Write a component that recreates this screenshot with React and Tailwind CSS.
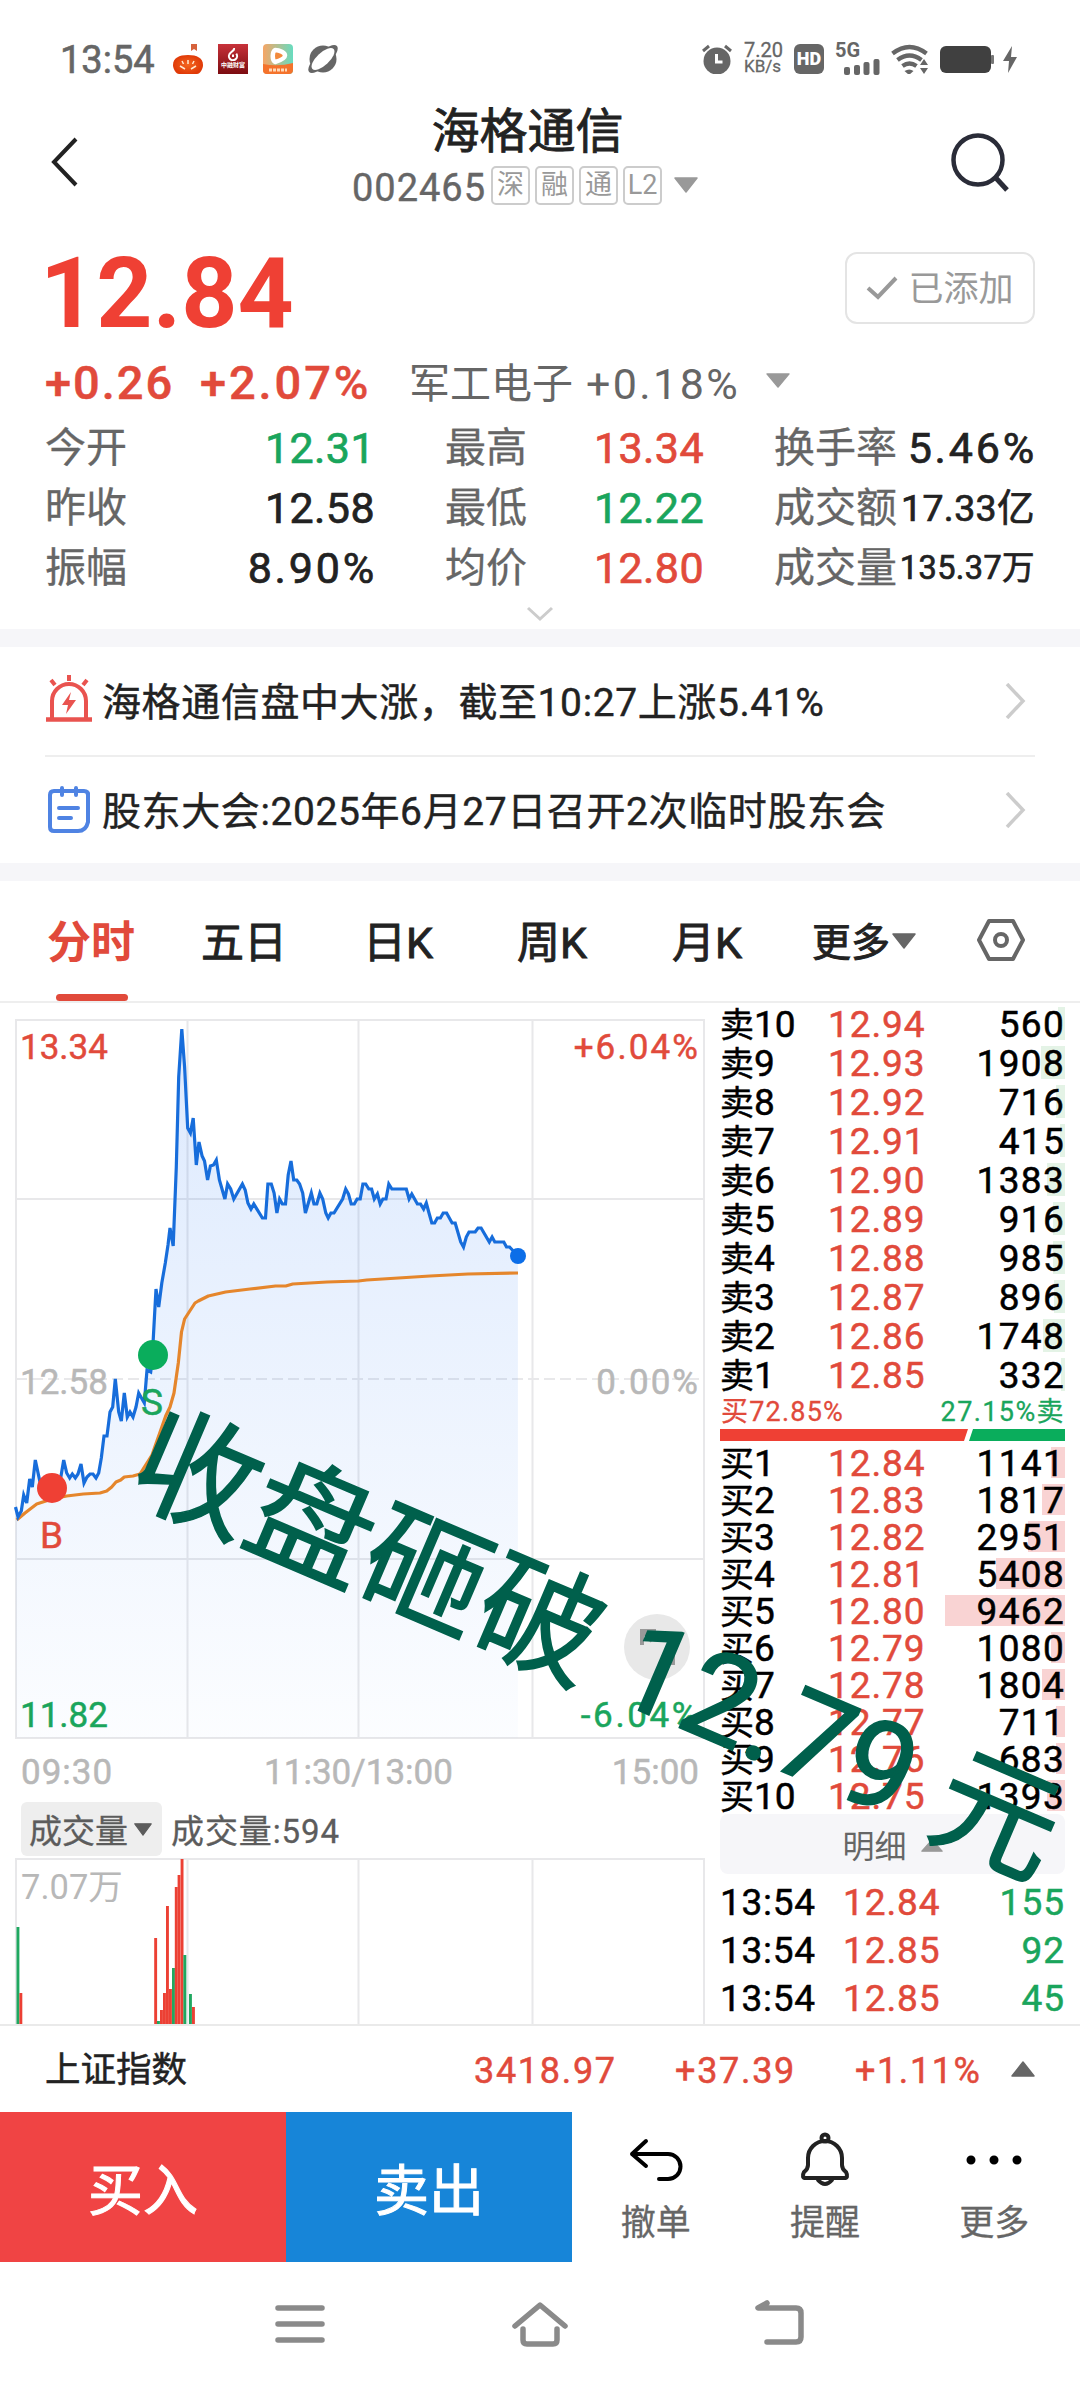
import React from "react";

const sells = [
  [10, "12.94", 560], [9, "12.93", 1908], [8, "12.92", 716], [7, "12.91", 415], [6, "12.90", 1383],
  [5, "12.89", 916], [4, "12.88", 985], [3, "12.87", 896], [2, "12.86", 1748], [1, "12.85", 332],
];
const buys = [
  [1, "12.84", 1141], [2, "12.83", 1817], [3, "12.82", 2951], [4, "12.81", 5408], [5, "12.80", 9462],
  [6, "12.79", 1080], [7, "12.78", 1804], [8, "12.77", 711], [9, "12.76", 683], [10, "12.75", 1393],
];
const trades = [["13:54", "12.84", 155], ["13:54", "12.85", 92], ["13:54", "12.85", 45]];
const maxVolume = 9462;

const priceLine =
  "15.5,1507 18,1517 21.3,1511 23.7,1495 26.7,1503 29.7,1479 32.3,1487 35.3,1460 40,1482 46.7,1490 60,1482 63.7,1460 66.7,1473 69.7,1478 72.3,1474 75.3,1478 78,1474 81,1464 84,1483 87,1477 90,1474 93,1474 96,1478 98.7,1473 101.3,1458 104,1436 107,1436 110,1412 112.7,1407 115.3,1379 118.7,1412 121.3,1421 124.3,1393 127.3,1417 130,1412 133,1417 136,1407 138.7,1393 144.3,1403 147,1370 150.7,1372 153,1355 153.2,1340 156,1289 158.7,1307 161.8,1283 165.3,1263 168,1245 170,1228 173.2,1246 176.3,1167 178.7,1077 181.8,1029 184.6,1067 187.7,1128 190.4,1133 193.2,1118 196.3,1165 199,1142 202.1,1156 204.5,1161 207.6,1180 210.4,1166 213.5,1165 216.3,1160 219.4,1180 224.9,1199 227.6,1184 230.7,1189 233.8,1199 242.4,1184 245.2,1190 247.9,1203 251,1209 253.8,1204 262.4,1218 265.5,1218 267.9,1184 271.3,1184 274.1,1193 276.9,1213 279.6,1199 282.4,1204 285.5,1204 288.2,1175 291,1161 293.7,1180 296.8,1180 299.6,1184 302.7,1193 305.4,1213 311.3,1193 314,1204 316.8,1204 319.9,1193 322.7,1199 325.8,1213 328.2,1218 330.9,1213 334,1213 342.6,1199 345.7,1189 348.5,1194 351.2,1204 354.3,1204 357.1,1199 360.2,1199 362.9,1184 365.7,1184 368.8,1189 371.6,1189 374.3,1199 377.4,1194 380.2,1204 382.9,1199 386,1199 388.8,1184 391.9,1189 406.3,1189 409.1,1199 411.8,1194 417.4,1204 420.5,1204 423.6,1209 426.3,1203 429,1213 431.8,1223 434.6,1223 437.3,1218 440.4,1218 443.2,1213 446.6,1213 452.1,1223 455.2,1223 460.7,1242 463.5,1247 466.3,1237 469,1232 475.2,1232 478,1228 481.1,1228 489.3,1242 492.1,1237 494.8,1242 503.8,1242 506.5,1247 509.6,1247 517.9,1256";
const averageLine =
  "16.7,1520 25,1513 36.7,1504 52,1499 66.7,1496 83.3,1494 100,1493 106.7,1491 111.7,1487 116,1482 120.7,1480 124.3,1477 133,1476 140,1474 152,1455 165.7,1416 170,1407 174,1393 178.3,1363 181.5,1332 184.6,1319 195,1303 198.3,1301 208.3,1296 225.6,1292 250,1289 275.5,1286 285.8,1286 292.7,1284 327,1282 358.5,1281 366.7,1280 430,1276 468,1274 518,1273";
const volumeBars = [
  [16.5, 1927, 0], [19.4, 1993, 1], [154.2, 1938, 1], [157, 2021, 0], [160, 2010, 1], [163, 1993, 1], [166, 1906, 1],
  [169, 1989, 1], [172, 1968, 0], [174.8, 1887, 1], [177.6, 1875, 1], [180.6, 1859, 1], [183.4, 1955, 0],
  [189, 1994, 0], [192, 2007, 1],
];

function Caret({ up = false, className }) {
  return (
    <svg viewBox="0 0 24 16" preserveAspectRatio="none" className={className}>
      <path d={up ? "M1 15 12 1 23 15Z" : "M1 1h22L12 15Z"} fill="currentColor" stroke="currentColor" strokeWidth="1.5" strokeLinejoin="round" />
    </svg>
  );
}

function StatusBar() {
  return (
    <div className="flex h-[78px] items-end pb-1 pl-[60px] text-[#666]">
      <span className="w-[113px] text-[38px] leading-[28px] [-webkit-text-stroke:0.6px_currentColor]">13:54</span>
      <svg viewBox="0 0 30 30" className="h-[30px] w-[30px]">
        <defs>
          <radialGradient id="pumpkin"><stop offset="0" stopColor="#f4671f" /><stop offset="1" stopColor="#e03a08" /></radialGradient>
        </defs>
        <path d="M18 0h6v7l-3-2-3 2Z" fill="#d6623c" />
        <path d="M0 21C0 14 6 11 15 11s15 3 15 10c0 4-3 9-6 9H6c-3 0-6-5-6-9Z" fill="url(#pumpkin)" />
        <path d="m7 22 5 3M23 22l-5 3M15 16v4M9 17l1.500 3M21 17l-1.500 3" stroke="#ffe9d0" strokeWidth="1.500" />
      </svg>
      <div className="ml-[15px] flex h-[30px] w-[30px] flex-col items-center bg-linear-to-b from-[#c8323a] to-[#7c0b10] text-white">
        <svg viewBox="0 0 14 16" className="mt-[4px] h-[13px] w-[12px]">
          <path d="M8 0C10 4 3 4 3 8M4 6a5 5 0 1 0 7 1M7 8v3" fill="none" stroke="#fff" strokeWidth="2.500" />
        </svg>
        <span className="whitespace-nowrap text-[6px] font-bold leading-[7px]">中融财富</span>
      </div>
      <svg viewBox="0 0 30 30" className="ml-[15px] h-[30px] w-[30px]">
        <defs>
          <linearGradient id="video" x1="0" y1="0" x2="1" y2="0"><stop offset="0" stopColor="#f6a565" /><stop offset="1" stopColor="#67dcc0" /></linearGradient>
        </defs>
        <rect width="30" height="30" rx="4" fill="url(#video)" />
        <path d="M0 20q15 3 30-1v7a4 4 0 0 1-4 4H4a4 4 0 0 1-4-4Z" fill="#f4732c" />
        <path d="M12 6c5 0 10 3 10 5.500s-5 5-10 6.500c-3-2-3-10 0-12Z" fill="#f28a3c" stroke="#fff" strokeWidth="4.500" strokeLinejoin="round" />
        <path d="M6 26h18" stroke="#ffd9b8" strokeWidth="3" strokeDasharray="3 1" />
      </svg>
      <svg viewBox="0 0 30 30" className="ml-[15px] h-[30px] w-[30px]">
        <circle cx="15" cy="15" r="13.500" fill="#666" />
        <ellipse cx="15" cy="15" rx="19" ry="7" transform="rotate(-43 15 15)" fill="#666" />
        <ellipse cx="15" cy="15" rx="14.500" ry="6.300" transform="rotate(-43 15 15)" fill="#fff" />
      </svg>

      <svg viewBox="0 0 30 30" className="ml-[364px] h-[30px] w-[30px]">
        <circle cx="15" cy="17" r="13.500" fill="#666" />
        <path d="m1 7 6-5M23 2l6 5" stroke="#666" strokeWidth="3" />
        <path d="M14.500 10v8h6" fill="none" stroke="#fff" strokeWidth="3" />
      </svg>
      <div className="ml-[12px] w-[50px] [-webkit-text-stroke:0.3px_currentColor]">
        <div className="-translate-y-px text-[20px] leading-[16px]">7.20</div>
        <div className="text-[17px] leading-[15px]">KB/s</div>
      </div>
      <div className="flex h-[30px] w-[30px] items-center justify-center rounded-[6px] bg-[#666] text-[18px] font-black leading-none text-white">HD</div>
      <div className="ml-[11px] flex h-[31px] w-[45px] flex-col">
        <span className="text-[20px] font-bold leading-[15px]">5G</span>
        <svg viewBox="0 0 36 18" className="-mt-[1px] ml-[9px] h-[18px] w-[36px] shrink-0">
          <g fill="#666">
            <rect y="10" width="6" height="8" rx="2" /><rect x="10" y="8" width="6" height="10" rx="2" />
            <rect x="19.500" y="5" width="6" height="13" rx="2" /><rect x="29.500" y="2" width="6" height="16" rx="2" />
          </g>
        </svg>
      </div>
      <svg viewBox="0 0 38 30" className="ml-[11px] h-[30px] w-[38px]">
        <g fill="none" stroke="#666" strokeWidth="4.300"><path d="M1.500 9.500q17-13 34 0M6.500 16q12-9 24 0M11.500 22q7-5 14 0" /></g>
        <path d="M13.500 27q5-3 9 0l-4.500 4Z" fill="#666" />
        <path d="m33 15 4 6h-8ZM33 30l4-6h-8Z" fill="#666" />
      </svg>
      <svg viewBox="0 0 54 28" className="ml-[11px] h-[28px] w-[54px]">
        <rect width="51" height="27" rx="6" fill="#404040" /><rect x="51" y="9" width="3" height="9" rx="1" fill="#777" />
      </svg>
      <svg viewBox="0 0 14 28" className="ml-[9px] h-[28px] w-[14px]"><path d="M9 0 0 15h6L5 27l9-16H8Z" fill="#666" /></svg>
    </div>
  );
}

function Header() {
  return (
    <div className="flex h-[147px] justify-between pl-[50px] pr-[69px]">
      <svg viewBox="0 0 30 52" className="mt-[58px] h-[52px] w-[30px]"><path d="M26 3 4 26l22 23" fill="none" stroke="#222" strokeWidth="4" /></svg>
      <div className="ml-[21px] flex flex-col items-center pt-[30px]">
        <h1 className="ml-[5px] text-[48px] leading-[48px] text-[#222] [-webkit-text-stroke:0.8px_currentColor]">海格通信</h1>
        <div className="mt-[7px] flex items-center gap-[5px] text-[#999]">
          <span className="pt-[6px] text-[38px] leading-[38px] tracking-[1px] text-[#666] [-webkit-text-stroke:0.4px_currentColor]">002465</span>
          {["深", "融", "通", "L2"].map((t) => (
            <span key={t} className="flex h-[39px] w-[39px] items-center justify-center rounded-[5px] border-2 border-[#ccc] pt-px text-[27px] leading-none">{t}</span>
          ))}
          <Caret className="ml-[7px] h-[16px] w-[24px]" />
        </div>
      </div>
      <svg viewBox="0 0 62 62" className="mt-[53px] h-[62px] w-[62px]">
        <circle cx="29" cy="29" r="24.500" fill="none" stroke="#2a2c38" strokeWidth="4.500" /><path d="m46 46 12 13" stroke="#2a2c38" strokeWidth="5" />
      </svg>
    </div>
  );
}

function Stat({ label, value, color = "text-[#222]", size = "text-[43px]" }) {
  const wide = value.endsWith("%");
  return (
    <div className="flex h-[60px] items-center justify-between pt-[3px] leading-none">
      <span className="text-[41px] text-[#666] [-webkit-text-stroke:0.3px_currentColor]">{label}</span>
      <span className={`whitespace-nowrap [-webkit-text-stroke:0.7px_currentColor] ${size} ${color} ${wide ? "-mr-[2px] tracking-[2.8px]" : "tracking-[0.4px]"}`}>{value}</span>
    </div>
  );
}

function Quote() {
  return (
    <section className="h-[404px] pl-[45px] pr-[45px]">
      <div className="flex h-[128px] justify-between pt-[15px]">
        <span className="-ml-[5px] pt-[4px] text-[98px] font-bold leading-[100px] tracking-[0.1px] text-[#ef4034]">12.84</span>
        <div className="mt-[12px] flex h-[72px] w-[190px] items-center justify-center gap-[10px] rounded-[12px] border-2 border-[#e4e4e4] text-[35px] leading-none text-[#999]">
          <svg viewBox="0 0 32 24" className="h-[24px] w-[32px]"><path d="m2 12 10 9L30 2" fill="none" stroke="#999" strokeWidth="4" /></svg>
          <span className="pt-[3px]">已添加</span>
        </div>
      </div>
      <div className="flex h-[64px] items-center pb-[5px] text-[47px] font-medium leading-none text-[#e14a3b]">
        <span className="w-[155px] tracking-[2px] [-webkit-text-stroke:0.5px_currentColor]">+0.26</span>
        <span className="w-[209px] tracking-[2.9px] [-webkit-text-stroke:0.5px_currentColor]">+2.07%</span>
        <span className="w-[177px] pt-[3px] text-[41px] font-normal text-[#666]">军工电子</span>
        <span className="w-[180px] pt-[3px] text-[43px] font-normal tracking-[2.400px] text-[#666]">+0.18%</span>
        <Caret className="mb-1 h-[15px] w-[24px] text-[#999]" />
      </div>
      <div className="grid grid-cols-[330px_259px_261px] justify-between">
        <div>
          <Stat label="今开" value="12.31" color="text-[#1aa55c]" />
          <Stat label="昨收" value="12.58" />
          <Stat label="振幅" value="8.90%" />
        </div>
        <div>
          <Stat label="最高" value="13.34" color="text-[#e14a3b]" />
          <Stat label="最低" value="12.22" color="text-[#1aa55c]" />
          <Stat label="均价" value="12.80" color="text-[#e14a3b]" />
        </div>
        <div>
          <Stat label="换手率" value="5.46%" />
          <Stat label="成交额" value="17.33亿" size="text-[37.5px]" />
          <Stat label="成交量" value="135.37万" size="text-[32.5px]" />
        </div>
      </div>
      <svg viewBox="0 0 28 16" className="mx-auto mt-[9px] h-[16px] w-[28px]"><path d="m2 2 12 11L26 2" fill="none" stroke="#ccc" strokeWidth="3" /></svg>
    </section>
  );
}

function Notice({ icon, children }) {
  return (
    <div className="flex h-full items-center text-[39px] leading-none text-[#222]">
      <span className="w-[57px]">{icon}</span>
      <span className="flex-1 whitespace-nowrap pt-[5px] tracking-[0.6px] [-webkit-text-stroke:0.4px_currentColor]">{children}</span>
      <svg viewBox="0 0 22 36" className="mr-[9px] h-[36px] w-[22px]"><path d="m3 1 16 17L3 35" fill="none" stroke="#ccc" strokeWidth="3.500" /></svg>
    </div>
  );
}

function Notices() {
  return (
    <section className="border-y-[18px] border-[#f6f6f9] px-[45px]">
      <div className="h-[110px] border-b-2 border-[#eee]">
        <Notice
          icon={
            <svg viewBox="0 0 48 48" className="-mt-[4px] h-[48px] w-[48px]" fill="none" stroke="#e9534f" strokeWidth="4">
              <path d="M7 44V26a17 17 0 0 1 34 0v18" /><path d="M1 44.500h46" strokeWidth="4.500" /><path d="M24 0v6M6 5l4 5M42 5l-4 5" />
              <path d="m26 17-9 13h6l-2 9 10-14h-7Z" fill="#e9534f" stroke="none" />
            </svg>
          }
        >
          海格通信盘中大涨，截至10:27上涨5.41%
        </Notice>
      </div>
      <div className="h-[106px]">
        <Notice
          icon={
            <svg viewBox="0 0 48 48" className="h-[48px] w-[48px]" fill="none" stroke="#4f83e3" strokeWidth="4" strokeLinecap="round">
              <path d="M43 7v29q-2 9-10 9H9q-4 0-4-4V9q0-4 4-4h30q4 0 4 4" /><path d="M17 2v7M31 2v7M14 22h19M14 32h12" />
            </svg>
          }
        >
          股东大会:2025年6月27日召开2次临时股东会
        </Notice>
      </div>
    </section>
  );
}

function Tabs() {
  return (
    <nav className="flex h-[122px] items-center border-b-2 border-[#eee] pl-[48px] text-[43px] leading-none text-[#222] [-webkit-text-stroke:0.9px_currentColor]">
      <div className="relative flex h-full w-[153px] items-center pt-[4px] text-[44px] font-bold text-[#e14a3b] [-webkit-text-stroke:0px]">
        <span className="-ml-[1px]">分时</span>
        <span className="absolute bottom-0 left-[8px] h-[7px] w-[72px] rounded-full bg-[#e14a3b]" />
      </div>
      <span className="w-[162px] pt-[4px]">五日</span>
      <span className="w-[154px] pt-[4px]">日K</span>
      <span className="w-[155px] pt-[4px]">周K</span>
      <span className="w-[140px] pt-[4px]">月K</span>
      <span className="w-[80px] pt-[4px] text-[39px]">更多</span>
      <Caret className="h-[16px] w-[24px] text-[#666]" />
      <svg viewBox="0 0 48 44" className="ml-[61px] h-[44px] w-[48px] -translate-y-[1px]" fill="none" stroke="#666" strokeWidth="4">
        <path d="M12 3h24l10 19-10 19H12L2 22Z" strokeLinejoin="round" /><circle cx="24" cy="22" r="6" />
      </svg>
    </nav>
  );
}

function Chart() {
  return (
    <div className="h-[1021px] w-[712px]">
      <svg viewBox="0 1003 712 788" className="block h-[788px] w-[712px] overflow-visible text-[35px]">
        <defs>
          <linearGradient id="area" gradientUnits="userSpaceOnUse" x1="0" y1="1030" x2="0" y2="1738">
            <stop offset="0" stopColor="#1a6ff5" stopOpacity="0.15" /><stop offset="1" stopColor="#1a6ff5" stopOpacity="0.015" />
          </linearGradient>
        </defs>
        <g stroke="#e8e8ea" strokeWidth="2" fill="none">
          <path d="M16 1020H704V1738H16ZM187.500 1020V1738M358.500 1020V1738M532.500 1020V1738M16 1199H704M16 1559H704" />
          <path d="M16 1379H704" strokeDasharray="11 5" />
        </g>
        <polygon points={`${priceLine} 517.9,1738 16,1738`} fill="url(#area)" />
        <polyline points={averageLine} fill="none" stroke="#e5862c" strokeWidth="3.200" strokeLinejoin="round" />
        <polyline points={priceLine} fill="none" stroke="#176ddb" strokeWidth="3.200" />
        <circle cx="518" cy="1256" r="8" fill="#0c6ee8" />
        <circle cx="52" cy="1488" r="15" fill="#ef4034" />
        <circle cx="153" cy="1355" r="15" fill="#0aad5c" />
        <circle cx="657" cy="1647" r="33" fill="#e8e8e8" />
        <path d="M642 1645v-14h14M642 1631l10 10M660 1663h13v-14" fill="none" stroke="#999" strokeWidth="4" />
        <g fill="#e14a3b" stroke="#e14a3b" strokeWidth="0.500">
          <text x="20" y="1059">13.34</text><text x="700" y="1059" textAnchor="end" letterSpacing="2.100">+6.04%</text>
          <text x="40" y="1548" fontSize="37">B</text>
        </g>
        <g fill="#b8b8b8" stroke="#b8b8b8" strokeWidth="0.500">
          <text x="20" y="1394">12.58</text><text x="700" y="1394" textAnchor="end" letterSpacing="2">0.00%</text>
          <text x="21" y="1784" letterSpacing="1">09:30</text><text x="358.500" y="1784" textAnchor="middle">11:30/13:00</text><text x="699" y="1784" textAnchor="end">15:00</text>
        </g>
        <g fill="#1aa55c" stroke="#1aa55c" strokeWidth="0.500">
          <text x="20" y="1727">11.82</text><text x="700" y="1727" textAnchor="end" letterSpacing="2.600">-6.04%</text>
          <text x="141" y="1415" fontSize="37">S</text>
        </g>
      </svg>
      <div className="flex h-[67px] items-center pl-[21px] text-[33px] leading-none text-[#5c5c5c] [-webkit-text-stroke:0.3px_currentColor]">
        <div className="mt-[9px] flex h-[54px] w-[141px] items-center gap-[6px] rounded-[6px] bg-[#eee] pl-[8px]">
          <span className="pt-[4px]">成交量</span><Caret className="h-[13px] w-[18px]" />
        </div>
        <span className="ml-[9px] mt-[9px] pt-[4px] tracking-[0.9px]">成交量:594</span>
      </div>
      <svg viewBox="0 1858 712 166" className="block h-[166px] w-[712px]">
        <path d="M16 2024V1859H704V2024M187.500 1859V2024M358.500 1859V2024M532.500 1859V2024" stroke="#e8e8ea" strokeWidth="2" fill="none" />
        {volumeBars.map(([x, y, rise]) => (
          <rect key={x} x={x} y={y} width="2.900" height={2024 - y} fill={rise ? "#ec4034" : "#1fa860"} />
        ))}
        <text x="21" y="1899" fill="#b8b8b8" fontSize="34.500">7.07万</text>
      </svg>
    </div>
  );
}

function Level({ side, row, tall }) {
  const [level, price, volume] = row;
  const barColor = side === "卖" ? "bg-[#e4f3e6]" : "bg-[#f9d3d3]";
  return (
    <div className={`flex items-center text-[37px] leading-none text-black [-webkit-text-stroke:0.5px_currentColor] ${tall ? "h-[39px]" : "h-[37px]"}`}>
      <span className="flex w-[108px] items-center pt-[2px]"><span className="text-[34px]">{side}</span>{level}</span>
      <span className="w-[100px] pt-[2px] tracking-[0.9px] text-[#e14a3b]">{price}</span>
      <span className={`relative flex flex-1 items-center justify-end ${tall ? "h-[33px]" : "h-[31px]"}`}>
        <span className={`absolute inset-y-0 right-0 ${barColor}`} style={{ width: (volume / maxVolume) * 120 }} />
        <span className="relative pt-[2px] tracking-[1.300px]">{volume}</span>
      </span>
    </div>
  );
}

function OrderBook() {
  return (
    <div className="ml-[8px] w-[345px] pt-px">
      {sells.map((r) => <Level key={r[0]} side="卖" row={r} tall />)}
      <div className="flex h-[35px] items-center justify-between pt-px text-[27px] leading-none [-webkit-text-stroke:0.3px_currentColor]">
        <span className="pl-px tracking-[1.200px] text-[#e14a3b]">买72.85%</span>
        <span className="tracking-[1.400px] text-[#1aa55c]">27.15%卖</span>
      </div>
      <svg viewBox="0 0 345 12" className="block h-[12px] w-[345px]">
        <path d="M0 0h248l-4 12H0Z" fill="#ef4034" /><path d="M253 0h92v12h-96Z" fill="#0aad5c" />
      </svg>
      <div className="pt-[3px]">{buys.map((r) => <Level key={r[0]} side="买" row={r} />)}</div>
      <div className="flex h-[60px] items-center justify-center gap-[14px] rounded-[8px] bg-[#f6f6f9] text-[32px] leading-none text-[#666]">
        <span className="pt-[6px]">明细</span><Caret up className="mt-[3px] h-[13px] w-[22px] text-[#999]" />
      </div>
      <div className="pt-[4px]">
        {trades.map(([time, price, volume], i) => (
          <div key={i} className="flex h-[48px] items-center text-[37px] leading-none text-black [-webkit-text-stroke:0.5px_currentColor]">
            <span className="w-[123px] tracking-[0.7px]">{time}</span>
            <span className="flex-1 tracking-[0.9px] text-[#e14a3b]">{price}</span>
            <span className="tracking-[1px] text-[#1aa55c]">{volume}</span>
          </div>
        ))}
      </div>
    </div>
  );
}

function IndexRow() {
  return (
    <div className="flex h-[88px] items-center border-t-2 border-[#eaeaea] pl-[45px] text-[36px] leading-none text-[#e14a3b] [-webkit-text-stroke:0.5px_currentColor]">
      <span className="w-[429px] pt-[3px] text-[35.500px] text-[#222]">上证指数</span>
      <span className="w-[201px] pt-[3px] tracking-[1.700px]">3418.97</span>
      <span className="w-[180px] pt-[3px] tracking-[1.700px]">+37.39</span>
      <span className="w-[156px] pt-[3px] tracking-[1.600px]">+1.11%</span>
      <Caret up className="h-[16px] w-[24px] text-[#666]" />
    </div>
  );
}

function Action({ label, children }) {
  return (
    <div className="flex flex-1 flex-col items-center text-[35px] leading-none text-[#666]">
      <svg viewBox="0 0 56 56" className="mt-[20px] h-[56px] w-[56px] -translate-x-px" fill="none" stroke="#222" strokeWidth="4" strokeLinecap="round" strokeLinejoin="round">{children}</svg>
      <span className="mt-[18px] -translate-x-px [-webkit-text-stroke:0.3px_currentColor]">{label}</span>
    </div>
  );
}

function ActionBar() {
  return (
    <div className="flex h-[150px]">
      <div className="flex w-[286px] items-center justify-center bg-[#f04444] pt-[8px] text-[55px] leading-none text-white [-webkit-text-stroke:1px_currentColor]">买入</div>
      <div className="flex w-[286px] items-center justify-center bg-[#1785d8] pt-[8px] text-[55px] leading-none text-white [-webkit-text-stroke:1px_currentColor]">卖出</div>
      <Action label="撤单"><path d="M18 9 4 22l14 12M4 22h36a12.500 12.500 0 0 1 0 25H31" stroke="#000" /></Action>
      <Action label="提醒">
        <path d="M11 28v-2a17 17 0 0 1 34 0v7q0 4 4 7 3 6-2 6H9q-5 0-2-6 4-3 4-7ZM21 48q7 8 14 0" /><circle cx="28" cy="6" r="3.500" />
      </Action>
      <Action label="更多"><path d="M5 28h.01M28 28h.01M51 28h.01" stroke="#000" strokeWidth="9" /></Action>
    </div>
  );
}

function SystemNav() {
  return (
    <div className="flex h-[126px] items-center justify-between px-[272px]">
      {[
        "M6 12h44M6 28h44M6 44h44",
        "M3 30 28 9l25 21M11 33v11q0 4 4 4h26q4 0 4-4V33",
        "M15 7 6 12h38q5 0 5 5v24q0 5-5 5H15",
      ].map((d) => (
        <svg key={d} viewBox="0 0 56 56" className="h-[56px] w-[56px] -translate-y-px" fill="none" stroke="#8a8a8a" strokeWidth="5.500" strokeLinecap="round" strokeLinejoin="round"><path d={d} /></svg>
      ))}
    </div>
  );
}

export default function App() {
  return (
    <main className="relative h-[2388px] w-[1080px] overflow-hidden bg-white font-['Roboto','Noto_Sans_CJK_SC',sans-serif]">
      <StatusBar />
      <Header />
      <Quote />
      <Notices />
      <Tabs />
      <div className="flex h-[1021px]"><Chart /><OrderBook /></div>
      <IndexRow />
      <ActionBar />
      <SystemNav />
      <div className="absolute left-[597px] top-[1647px] -translate-x-1/2 -translate-y-1/2 rotate-[23.1deg] whitespace-pre text-[124px] leading-none text-[#00604c] [-webkit-text-stroke:1.6px_currentColor]">收盘砸破 12.79 元</div>
    </main>
  );
}
